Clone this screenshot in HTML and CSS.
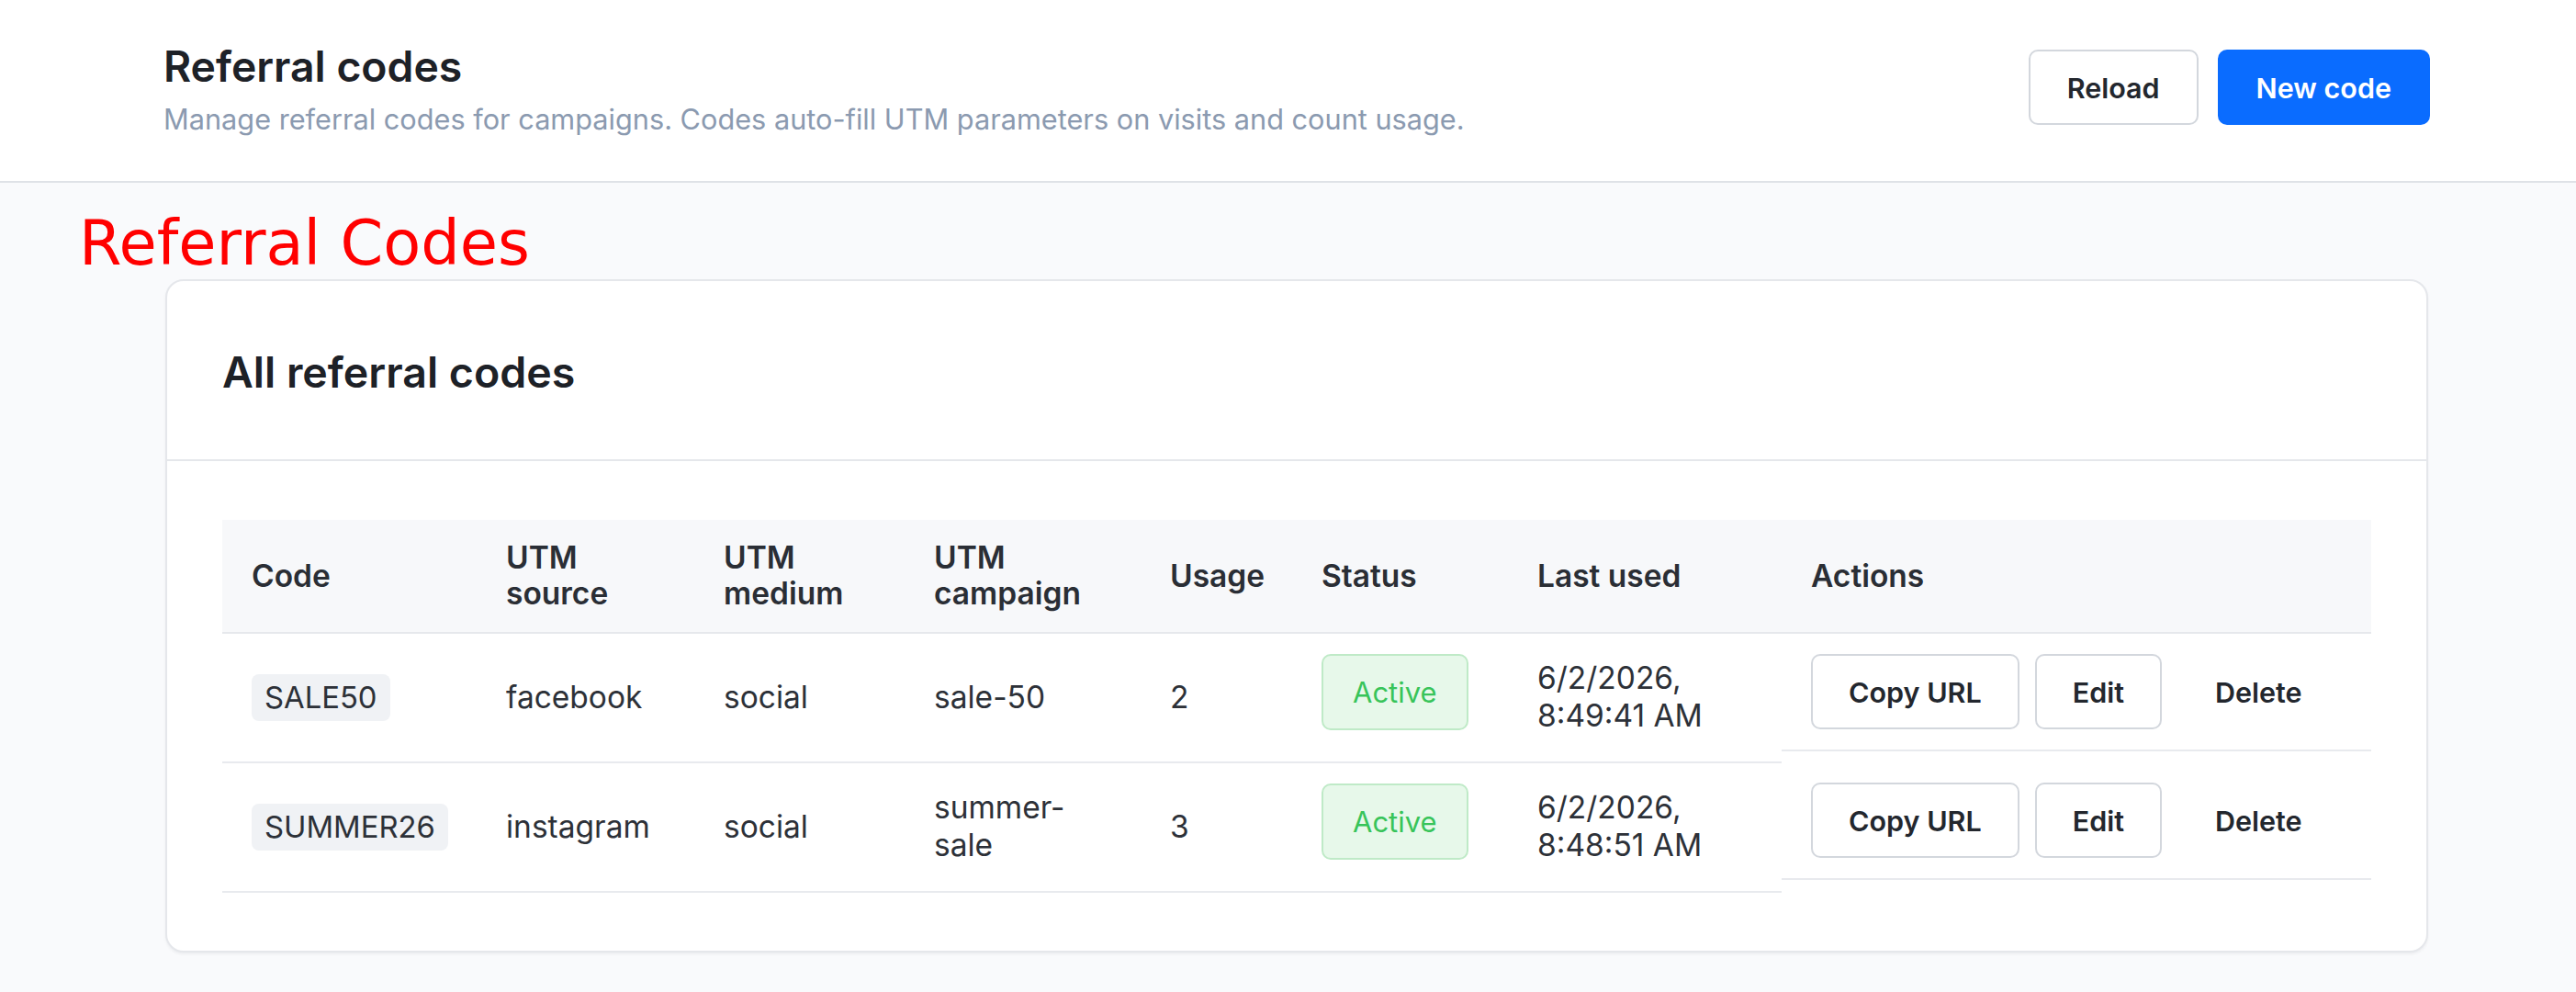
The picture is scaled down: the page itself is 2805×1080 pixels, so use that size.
FILE: index.html
```html
<!DOCTYPE html>
<html lang="en">
<head>
<meta charset="utf-8">
<title>Referral codes</title>
<link rel="stylesheet" href="styles.css">
</head>
<body>
<header class="topbar">
  <div class="topbar-text">
    <h1 class="topbar-title">Referral codes</h1>
    <p class="topbar-sub">Manage referral codes for campaigns. Codes auto-fill UTM parameters on visits and count usage.</p>
  </div>
  <div class="topbar-actions">
    <button class="btn btn-outline" type="button">Reload</button>
    <button class="btn btn-primary" type="button">New code</button>
  </div>
</header>

<main class="page">
  <h2 class="page-label">Referral Codes</h2>

  <section class="card">
    <div class="card-head">
      <h3 class="card-title">All referral codes</h3>
    </div>
    <div class="card-body">
      <table class="codes">
        <colgroup>
          <col class="col-code">
          <col class="col-source">
          <col class="col-medium">
          <col class="col-campaign">
          <col class="col-usage">
          <col class="col-status">
          <col class="col-last">
          <col class="col-actions">
        </colgroup>
        <thead>
          <tr>
            <th>Code</th>
            <th>UTM source</th>
            <th>UTM medium</th>
            <th>UTM campaign</th>
            <th>Usage</th>
            <th>Status</th>
            <th>Last used</th>
            <th>Actions</th>
          </tr>
        </thead>
        <tbody>
          <tr>
            <td><span class="code-tag">SALE50</span></td>
            <td>facebook</td>
            <td>social</td>
            <td>sale-50</td>
            <td>2</td>
            <td class="status-cell"><span class="status status-active">Active</span></td>
            <td>6/2/2026, 8:49:41 AM</td>
            <td class="actions-cell">
              <div class="row-actions">
                <button class="btn btn-outline" type="button">Copy URL</button>
                <button class="btn btn-outline" type="button">Edit</button>
                <button class="btn btn-ghost" type="button">Delete</button>
              </div>
            </td>
          </tr>
          <tr>
            <td><span class="code-tag">SUMMER26</span></td>
            <td>instagram</td>
            <td>social</td>
            <td>summer-sale</td>
            <td>3</td>
            <td class="status-cell"><span class="status status-active">Active</span></td>
            <td>6/2/2026, 8:48:51 AM</td>
            <td class="actions-cell">
              <div class="row-actions">
                <button class="btn btn-outline" type="button">Copy URL</button>
                <button class="btn btn-outline" type="button">Edit</button>
                <button class="btn btn-ghost" type="button">Delete</button>
              </div>
            </td>
          </tr>
        </tbody>
      </table>
    </div>
  </section>
</main>
</body>
</html>
```

FILE: styles.css
```css
* {
  box-sizing: border-box;
}

html,
body {
  margin: 0;
  background: #f9fafc;
}

body {
  font-family: Inter, "Liberation Sans", sans-serif;
  color: #2d3138;
}

/* top bar */
.topbar {
  display: flex;
  align-items: center;
  justify-content: space-between;
  height: 199px;
  padding: 0 159px 4px 178px;
  background: #ffffff;
  border-bottom: 2px solid #dfe2e7;
}

.topbar-title {
  margin: 0;
  font-size: 46.3px;
  font-weight: 600;
  line-height: 56px;
  color: #1d2127;
}

.topbar-sub {
  margin: 10px 0 0;
  font-size: 30.7px;
  line-height: 40px;
  color: #8b9ab0;
}

.topbar-actions {
  display: flex;
  gap: 21px;
  margin-bottom: 3px;
}

/* buttons */
.btn {
  height: 82px;
  padding: 0 40px;
  font-family: inherit;
  font-size: 30.5px;
  font-weight: 600;
  color: #23272e;
  background: #ffffff;
  border: 2px solid #d3d7dd;
  border-radius: 10px;
  cursor: pointer;
}

.row-actions .btn {
  padding: 0 39px;
}

.btn-primary {
  color: #ffffff;
  background: #0a6cff;
  border-color: #0a6cff;
}

.btn-ghost {
  background: transparent;
  border-color: transparent;
}

/* page */
.page {
  padding: 28px 161px 64px 86px;
}

.page-label {
  margin: 0;
  font-family: "DejaVu Sans", sans-serif;
  font-size: 67px;
  font-weight: 400;
  line-height: 76px;
  color: #ff0000;
}

.card {
  margin: 1px 0 0 94px;
  background: #ffffff;
  border: 2px solid #e5e7eb;
  border-radius: 20px;
  box-shadow: 0 2px 3px rgba(16, 24, 40, 0.05);
}

.card-head {
  padding: 72px 60px 68px;
  border-bottom: 2px solid #e5e7eb;
}

.card-title {
  margin: 0;
  font-size: 46.5px;
  font-weight: 600;
  line-height: 54px;
  color: #1d2127;
}

.card-body {
  padding: 64px 60px 63px;
}

/* table */
.codes {
  width: 100%;
  border-collapse: collapse;
  table-layout: fixed;
}

.col-code { width: 277px; }
.col-source { width: 237px; }
.col-medium { width: 229px; }
.col-campaign { width: 257px; }
.col-usage { width: 165px; }
.col-status { width: 235px; }
.col-last { width: 298px; }
.col-actions { width: 642px; }

.codes th {
  padding: 22px 32px;
  font-size: 33.5px;
  font-weight: 600;
  line-height: 39px;
  text-align: left;
  vertical-align: middle;
  color: #2a2e35;
  background: #f7f8fa;
  border-bottom: 2px solid #e6e8ec;
}

.codes td {
  padding: 28px 32px 29px;
  font-size: 33.5px;
  line-height: 41px;
  vertical-align: middle;
  color: #2d3138;
  border-bottom: 2px solid #e8eaee;
}

.codes td.status-cell {
  padding-top: 22px;
  vertical-align: top;
}

.codes td.actions-cell {
  padding: 0;
  vertical-align: top;
  border-bottom: none;
}

.row-actions {
  display: flex;
  align-items: center;
  gap: 17px;
  padding: 22px 32px;
  border-bottom: 2px solid #e8eaee;
}

.code-tag {
  display: inline-block;
  padding: 8px 14px;
  font-size: 32.8px;
  line-height: 35px;
  color: #2d3138;
  background: #f0f2f5;
  border-radius: 8px;
}

.status {
  display: inline-flex;
  align-items: center;
  height: 83px;
  padding: 0 32px;
  font-size: 31px;
  border-radius: 10px;
}

.status-active {
  color: #38c45a;
  background: #e7f8ea;
  border: 2px solid #bfeac7;
}
```
